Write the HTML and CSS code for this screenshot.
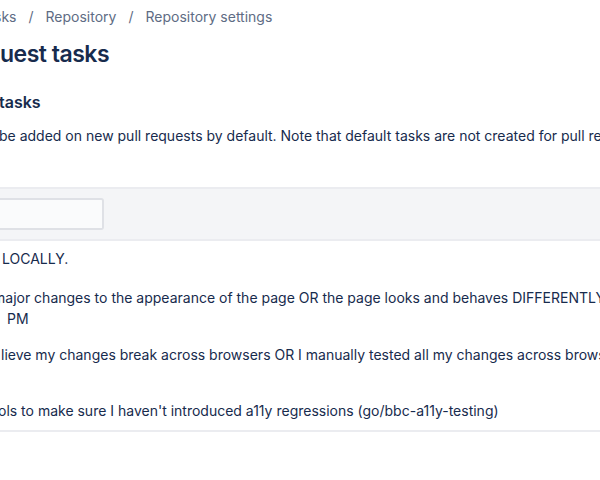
FILE: index.html
```html
<!DOCTYPE html>
<html lang="en">
<head>
<meta charset="utf-8">
<title>Pull request tasks</title>
<link rel="stylesheet" href="styles.css">
</head>
<body>
<div class="page">
  <nav class="crumbs">
    <span class="crumb c-first">sks</span>
    <span class="sep">/</span>
    <span class="crumb">Repository</span>
    <span class="sep">/</span>
    <span class="crumb">Repository settings</span>
  </nav>
  <h1 class="title">uest tasks</h1>
  <h2 class="subtitle">tasks</h2>
  <p class="desc">be added on new pull requests by default. Note that default tasks are not created for pull requests that already exist.</p>

  <div class="toolbar">
    <div class="field"></div>
  </div>

  <ul class="tasks">
    <li class="task first"><span class="t1">LOCALLY.</span></li>
    <li class="task second"><span class="t2">major changes to the appearance of the page OR the page looks and behaves DIFFERENTLY</span><span class="t2b"> PM</span></li>
    <li class="task tall"><span class="t3">lieve my changes break across browsers OR I manually tested all my changes across browsers</span></li>
    <li class="task last"><span class="t4">ols to make sure I haven't introduced a11y regressions (go/bbc-a11y-testing)</span></li>
  </ul>
</div>
</body>
</html>
```

FILE: styles.css
```css
html, body {
  margin: 0;
  padding: 0;
  background: #ffffff;
}
body {
  width: 600px;
  height: 480px;
  overflow: hidden;
  font-family: Inter, "Noto Sans", "Liberation Sans", sans-serif;
  color: #172b4d;
  font-size: 14px;
}
.page {
  width: 600px;
}
.crumbs {
  display: flex;
  align-items: center;
  gap: 12px;
  height: 20px;
  padding-top: 7px;
  white-space: nowrap;
  color: #5e6c84;
  font-size: 14px;
  line-height: 20px;
}
.c-first {
  margin-left: -6px;
}
.sep {
  color: #5e6c84;
}
.title {
  margin: 13px 0 0 0;
  font-size: 23px;
  line-height: 28px;
  font-weight: 600;
  color: #172b4d;
  letter-spacing: -0.5px;
  white-space: nowrap;
}
.subtitle {
  margin: 24px 0 0 -1px;
  font-size: 16px;
  line-height: 20px;
  font-weight: 600;
  color: #172b4d;
  white-space: nowrap;
}
.desc {
  margin: 14px 0 0 -1px;
  font-size: 14px;
  line-height: 20px;
  white-space: nowrap;
}
.toolbar {
  margin-top: 41px;
  height: 50px;
  background: #f4f5f7;
  border-top: 2px solid #ebecf0;
  border-bottom: 2px solid #ebecf0;
  display: flex;
  align-items: center;
}
.field {
  width: 102px;
  height: 28px;
  background: #fafbfc;
  border: 2px solid #dfe1e6;
  border-left: none;
  border-radius: 0 3px 3px 0;
}
.tasks {
  list-style: none;
  margin: 0;
  padding: 0;
  border-bottom: 2px solid #ebecf0;
}
.task {
  white-space: nowrap;
  font-size: 14px;
  line-height: 21px;
  padding: 9px 0 7px 0;
}
.task.first {
  padding-top: 7px;
  padding-bottom: 9px;
}
.task.second {
  padding-bottom: 6px;
}
.task.tall {
  padding-bottom: 26px;
}
.task.last {
  padding-bottom: 9px;
}
.task span {
  display: block;
}
.t1 { margin-left: 2px; }
.t2 { margin-left: -7px; }
.t2b { margin-left: 7px; }
.t3 { margin-left: 1px; }
.t4 { margin-left: -2px; }
```
